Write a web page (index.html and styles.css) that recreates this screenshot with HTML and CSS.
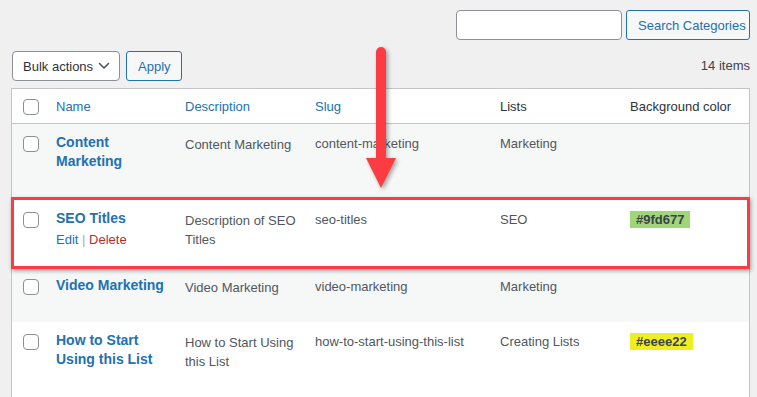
FILE: index.html
```html
<!DOCTYPE html>
<html lang="en">
<head>
<meta charset="utf-8">
<title>Categories</title>
<link rel="stylesheet" href="styles.css">
</head>
<body>
<div class="page">
  <div class="search-row">
    <div class="search-input"></div>
    <div class="btn btn-search">Search Categories</div>
  </div>
  <div class="tablenav">
    <div class="select">
      <span>Bulk actions</span>
      <svg class="chev" width="12" height="8" viewBox="0 0 12 8"><polyline points="1.5,1.5 6,6 10.5,1.5" fill="none" stroke="#50575e" stroke-width="1.6" stroke-linecap="round" stroke-linejoin="round"/></svg>
    </div>
    <div class="btn btn-apply">Apply</div>
    <div class="count">14 items</div>
  </div>
  <table class="list">
    <colgroup>
      <col class="c-check"><col class="c-name"><col class="c-desc"><col class="c-slug"><col class="c-lists"><col class="c-bg">
    </colgroup>
    <thead>
      <tr>
        <th class="check"><span class="cb"></span></th>
        <th class="sort">Name</th>
        <th class="sort">Description</th>
        <th class="sort">Slug</th>
        <th>Lists</th>
        <th>Background color</th>
      </tr>
    </thead>
    <tbody>
      <tr class="r1 alt">
        <td class="check"><span class="cb"></span></td>
        <td class="name"><a class="title">Content Marketing</a></td>
        <td class="desc">Content Marketing</td>
        <td>content-marketing</td>
        <td>Marketing</td>
        <td></td>
      </tr>
      <tr class="r2">
        <td class="check"><span class="cb"></span></td>
        <td class="name"><a class="title">SEO Titles</a>
          <div class="actions"><a class="edit">Edit</a> <span class="sep">|</span> <a class="del">Delete</a></div></td>
        <td class="desc">Description of SEO Titles</td>
        <td>seo-titles</td>
        <td>SEO</td>
        <td><span class="badge badge-green">#9fd677</span></td>
      </tr>
      <tr class="r3 alt">
        <td class="check"><span class="cb"></span></td>
        <td class="name"><a class="title">Video Marketing</a></td>
        <td class="desc">Video Marketing</td>
        <td>video-marketing</td>
        <td>Marketing</td>
        <td></td>
      </tr>
      <tr class="r4">
        <td class="check"><span class="cb"></span></td>
        <td class="name"><a class="title">How to Start<br>Using this List</a></td>
        <td class="desc">How to Start Using this List</td>
        <td>how-to-start-using-this-list</td>
        <td>Creating Lists</td>
        <td><span class="badge badge-yellow">#eeee22</span></td>
      </tr>
    </tbody>
  </table>
</div>
<div class="annot-box"></div>
<svg class="annot-arrow" width="32" height="150" viewBox="0 0 32 150">
  <line x1="15" y1="8" x2="15" y2="118" stroke="#fb3c42" stroke-width="10" stroke-linecap="round"/>
  <polygon points="0,114 30,114 15,144" fill="#fb3c42"/>
</svg>
</body>
</html>
```

FILE: styles.css
```css
* { box-sizing: border-box; }
html, body { margin: 0; padding: 0; }
body {
  background: #f0f0f1;
  font-family: "Liberation Sans", Arial, sans-serif;
  font-size: 13px;
  color: #3c434a;
  width: 757px;
  height: 397px;
  overflow: hidden;
  position: relative;
}
.page { padding: 10px 7px 0 11px; }

.search-row {
  display: flex;
  justify-content: flex-end;
  gap: 4px;
  height: 30px;
}
.search-input {
  width: 166px;
  height: 30px;
  background: #fff;
  border: 1px solid #8c8f94;
  border-radius: 4px;
}
.btn {
  height: 30px;
  border: 1px solid #2271b1;
  border-radius: 3px;
  background: #f6f7f7;
  color: #2271b1;
  display: flex;
  align-items: center;
  font-size: 13px;
}
.btn-search { width: 124px; padding: 0 0 0 11px; }
.btn-apply { width: 56px; padding: 0 0 0 11px; }

.tablenav {
  margin-top: 11px;
  height: 30px;
  display: flex;
  align-items: center;
  gap: 6px;
}
.select {
  margin-left: 1px;
  width: 108px;
  height: 30px;
  background: #fff;
  border: 1px solid #8c8f94;
  border-radius: 4px;
  color: #2c3338;
  display: flex;
  align-items: center;
  padding: 0 9px 0 10px;
  justify-content: space-between;
}
.chev { display: block; }
.count { margin-left: auto; color: #3c434a; padding-bottom: 2px; }

.list {
  margin-top: 7px;
  width: 739px;
  table-layout: fixed;
  border-collapse: separate;
  border-spacing: 0;
  border: 1px solid #c3c4c7;
  background: #fff;
}
.c-check { width: 34px; }
.c-name { width: 129px; }
.c-desc { width: 130px; }
.c-slug { width: 185px; }
.c-lists { width: 130px; }
.c-bg { width: 129px; }

th {
  text-align: left;
  font-weight: normal;
  padding: 9px 10px 7px;
  line-height: 18px;
  height: 35px;
  border-bottom: 1px solid #c3c4c7;
  color: #2c3338;
  white-space: nowrap;
}
th.sort { color: #2271b1; }
th.check { padding: 1px 0 0 11px; vertical-align: middle; }

td {
  vertical-align: top;
  padding: 10px 10px 8px;
  line-height: 19px;
  color: #50575e;
}
td.check { padding: 12px 0 0 11px; }
td.name { padding: 9px 8px 8px 10px; }
td.desc { padding: 11px 6px 8px 10px; }

.cb {
  display: block;
  width: 16px;
  height: 16px;
  border: 1px solid #8c8f94;
  border-radius: 4px;
  background: #fff;
}

tr.alt { background: #f6f7f7; }
tr.r1 { height: 76px; }
tr.r2 { height: 67px; }
tr.r3 { height: 55px; }
tr.r4 { height: 90px; }

.title {
  color: #2271b1;
  font-weight: bold;
  font-size: 14px;
  line-height: 19px;
  display: block;
}
.actions {
  padding-top: 3px;
  line-height: 18px;
  font-size: 13px;
}
.edit { color: #2271b1; }
.del { color: #b32d2e; }
.sep { color: #a7aaad; }

.badge {
  display: inline-block;
  height: 17px;
  line-height: 17px;
  padding: 0 6px;
  font-weight: bold;
  color: #3c434a;
  margin-top: -1px;
}
.badge-green { background: #9fd677; }
.badge-yellow { background: #eeee22; }

.annot-box {
  position: absolute;
  left: 11px;
  top: 197px;
  width: 739px;
  height: 72px;
  border: 3px solid #fb3c42;
  box-shadow: 1px 2px 4px rgba(0,0,0,0.35);
  pointer-events: none;
}
.annot-arrow {
  position: absolute;
  left: 366px;
  top: 44px;
  filter: drop-shadow(2px 2px 2px rgba(0,0,0,0.35));
}
```
